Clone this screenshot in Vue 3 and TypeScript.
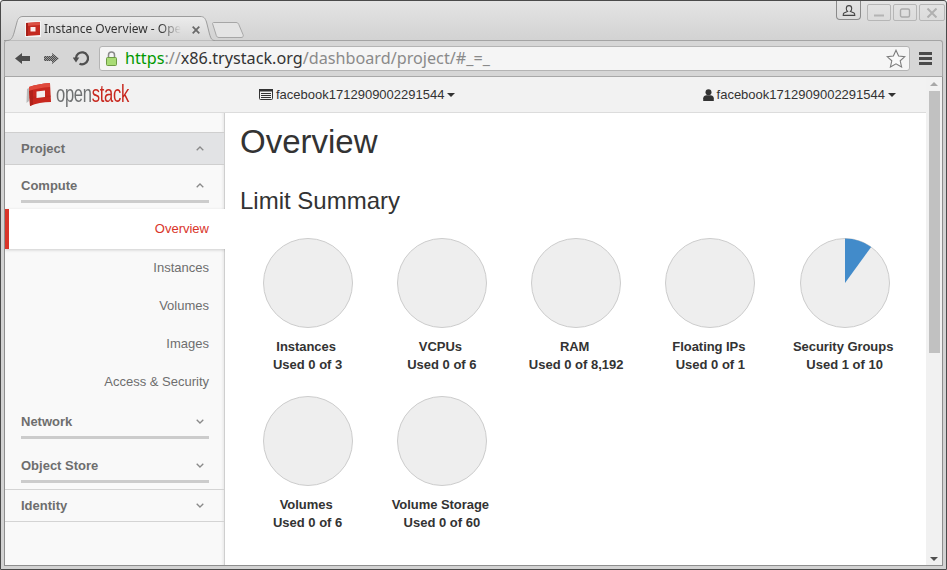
<script setup lang="ts">
interface Limit {
  name: string;
  used: number;
  total: number;
}

const limits: Limit[] = [
  { name: 'Instances', used: 0, total: 3 },
  { name: 'VCPUs', used: 0, total: 6 },
  { name: 'RAM', used: 0, total: 8192 },
  { name: 'Floating IPs', used: 0, total: 1 },
  { name: 'Security Groups', used: 1, total: 10 },
  { name: 'Volumes', used: 0, total: 6 },
  { name: 'Volume Storage', used: 0, total: 60 },
];

const computeItems = ['Instances', 'Volumes', 'Images', 'Access & Security'];
const user = 'facebook1712909002291544';

const slicePath = (l: Limit): string => {
  const a = (l.used / l.total) * Math.PI * 2;
  const x = 45 + 44.5 * Math.sin(a);
  const y = 45 - 44.5 * Math.cos(a);
  return `M45 45 L45 0.5 A44.5 44.5 0 0 1 ${x.toFixed(2)} ${y.toFixed(2)} Z`;
};
</script>

<template>
  <div class="window">
    <div class="tabstrip">
      <div class="tab">
        <svg class="tab-shape" width="212" height="25" viewBox="0 0 212 25">
          <defs>
            <linearGradient id="tabfill" x1="0" y1="0" x2="0" y2="1">
              <stop offset="0" stop-color="#ececec" />
              <stop offset="1" stop-color="#d6d6d6" />
            </linearGradient>
          </defs>
          <path d="M0 24.5 H3 C7 24.5 8.5 22 10 17 L13 6 C14 2 16 0.5 19 0.5 H196 C200 0.5 201 2 202.5 6 L205.5 18 C207 23 208 24.5 211 24.5" fill="url(#tabfill)" stroke="#9c9c9c" />
        </svg>
        <svg class="favicon" width="16" height="16" viewBox="0 0 16 16">
          <rect width="16" height="16" fill="#f4f4f4" />
          <path d="M1 2 L15 1 V14 L1 15 Z" fill="#c42a20" />
          <path d="M1 2 L15 1 V4 L1 5 Z" fill="#dc5044" />
          <path d="M1 2 H3 V15 H1 Z" fill="#a82018" />
          <rect x="5.5" y="6" width="5" height="4.5" fill="#fbeeee" />
        </svg>
        <span class="tab-title">Instance Overview - Ope</span>
        <svg class="tab-close" width="8" height="8" viewBox="0 0 8 8">
          <path d="M0.7 0.7 L7.3 7.3 M7.3 0.7 L0.7 7.3" stroke="#6a6a6a" stroke-width="1.8" />
        </svg>
      </div>
      <svg class="newtab" width="32" height="16" viewBox="0 0 32 16">
        <path d="M0.5 1.5 C0.5 0.8 1 0.5 2 0.5 H24 C25.5 0.5 26.2 1.2 26.8 2.5 L31 12.5 C31.8 14.3 31 15.5 29 15.5 H7 C5.5 15.5 4.8 14.8 4.3 13.5 Z" fill="#e4e4e4" stroke="#a6a6a6" />
      </svg>
      <div class="spacer"></div>
      <div class="profile">
        <svg width="14" height="11" viewBox="0 0 14 11">
          <path d="M7 0.6 C9 0.6 9.7 2 9.7 3.4 C9.7 4.8 9 5.9 8.4 6.4 L12 8 C12.6 8.3 12.8 9 12.8 10.4 H1.2 C1.2 9 1.4 8.3 2 8 L5.6 6.4 C5 5.9 4.3 4.8 4.3 3.4 C4.3 2 5 0.6 7 0.6 Z" fill="none" stroke="#444" stroke-width="1.1" />
        </svg>
      </div>
      <div class="winbtns">
        <div class="winbtn">
          <svg width="12" height="10" viewBox="0 0 12 10"><path d="M1 7.5 H11" stroke="#b4b4b4" stroke-width="2" /></svg>
        </div>
        <div class="winbtn">
          <svg width="12" height="10" viewBox="0 0 12 10"><rect x="1.5" y="1" width="9" height="8" rx="1.5" fill="none" stroke="#aaa" stroke-width="1.4" /></svg>
        </div>
        <div class="winbtn close">
          <svg width="12" height="10" viewBox="0 0 12 10"><path d="M1.5 0.5 L10.5 9.5 M10.5 0.5 L1.5 9.5" stroke="#b0b0b0" stroke-width="2" /></svg>
        </div>
      </div>
    </div>

    <div class="toolbar">
      <svg class="tool back" width="15" height="11" viewBox="0 0 15 11">
        <path d="M0 5.5 L7 0 V3 H15 V8 H7 V11 Z" fill="#4d4d4d" />
      </svg>
      <svg class="tool forward" width="15" height="11" viewBox="0 0 15 11">
        <defs>
          <pattern id="dither" width="2" height="2" patternUnits="userSpaceOnUse">
            <rect width="2" height="2" fill="#9a9a9a" />
            <rect width="1" height="1" fill="#4d4d4d" />
            <rect x="1" y="1" width="1" height="1" fill="#4d4d4d" />
          </pattern>
        </defs>
        <path d="M15 5.5 L8 0 V3 H0 V8 H8 V11 Z" fill="url(#dither)" />
      </svg>
      <svg class="tool reload" width="16" height="15" viewBox="0 0 16 15">
        <path d="M3 7 A6 6 0 1 1 6.5 12.8" fill="none" stroke="#4f4f4f" stroke-width="2.3" />
        <path d="M-0.3 6.5 H6.3 L3 11.5 Z" fill="#4f4f4f" />
      </svg>
      <div class="omnibox">
        <svg class="lock" width="11" height="15" viewBox="0 0 11 15">
          <path d="M2.5 7 V4 C2.5 2 3.7 1 5.5 1 C7.3 1 8.5 2 8.5 4 V7" fill="none" stroke="#8a8a8a" stroke-width="1.5" />
          <rect x="0.5" y="6.5" width="10" height="8" rx="1" fill="#a9dc76" stroke="#6d9a45" />
        </svg>
        <span class="url"><span class="scheme">https</span><span class="dim">://</span><span class="host">x86.trystack.org</span><span class="dim">/dashboard/project/#_=_</span></span>
        <svg class="star" width="20" height="19" viewBox="0 0 20 19">
          <path d="M10 1.2 L12.6 7 L18.9 7.6 L14.2 11.8 L15.6 18 L10 14.8 L4.4 18 L5.8 11.8 L1.1 7.6 L7.4 7 Z" fill="#fafafa" stroke="#7c7c7c" stroke-width="1.1" />
        </svg>
      </div>
      <div class="hamburger"><i></i><i></i><i></i></div>
    </div>

    <div class="page">
      <div class="viewport">
        <header class="navbar">
          <div class="brand">
            <svg width="26" height="25" viewBox="0 0 26 25">
              <path d="M0.5 21 L3 19 V6 L1 7 Z" fill="#b9b9b9" />
              <path d="M3 5 C9 3 16 1.5 24 1 L25 20 C17 20 10 21.5 4 24 Z" fill="#c8281f" />
              <path d="M3 5 C9 3 16 1.5 24 1 V5 C16 5.5 9 7 3 9 Z" fill="#e0493c" />
              <path d="M3 9 L7 8 V22.5 L4 24 Z" fill="#b1221a" />
              <path d="M3.5 15 L24.6 13.5 V15 L3.7 16.5 Z" fill="#b1221a" opacity="0.5" />
              <path d="M10.5 9.5 L19 8.6 V15 L10.5 16 Z" fill="#f4f0ee" />
            </svg>
            <span class="wordmark"><span class="open">open</span><span class="stack">stack</span></span>
          </div>
          <div class="project-picker">
            <svg width="14" height="11" viewBox="0 0 14 11">
              <rect x="0.5" y="0.5" width="13" height="10" rx="1" fill="none" stroke="#333" />
              <rect x="0" y="0" width="14" height="2.5" fill="#333" />
              <path d="M2 4.5 H12 M2 6.5 H12 M2 8.5 H12" stroke="#333" />
            </svg>
            <span>{{ user }}</span><i class="caret"></i>
          </div>
          <div class="user-menu">
            <svg width="11" height="12" viewBox="0 0 11 12">
              <circle cx="5.5" cy="3.2" r="3" fill="#333" />
              <path d="M0.2 12 V9.3 C0.2 7.4 2 6.2 3.5 6.2 H7.5 C9 6.2 10.8 7.4 10.8 9.3 V12 Z" fill="#333" />
            </svg>
            <span>{{ user }}</span><i class="caret"></i>
          </div>
        </header>

        <div class="body">
          <aside class="sidebar">
            <div class="dash-head">
              <span>Project</span>
              <svg class="chev" width="8" height="5" viewBox="0 0 8 5"><path d="M0.7 4.3 L4 1 L7.3 4.3" fill="none" stroke="#8a8a8a" stroke-width="1.3" /></svg>
            </div>

            <div class="group-head">
              <span>Compute</span>
              <svg class="chev" width="8" height="5" viewBox="0 0 8 5"><path d="M0.7 4.3 L4 1 L7.3 4.3" fill="none" stroke="#8a8a8a" stroke-width="1.3" /></svg>
            </div>
            <a class="item active">Overview</a>
            <a v-for="item in computeItems" :key="item" class="item">{{ item }}</a>

            <div class="group-head">
              <span>Network</span>
              <svg class="chev" width="8" height="5" viewBox="0 0 8 5"><path d="M0.7 0.7 L4 4 L7.3 0.7" fill="none" stroke="#8a8a8a" stroke-width="1.3" /></svg>
            </div>
            <div class="group-head spaced">
              <span>Object Store</span>
              <svg class="chev" width="8" height="5" viewBox="0 0 8 5"><path d="M0.7 0.7 L4 4 L7.3 0.7" fill="none" stroke="#8a8a8a" stroke-width="1.3" /></svg>
            </div>
            <div class="dash-head plain">
              <span>Identity</span>
              <svg class="chev" width="8" height="5" viewBox="0 0 8 5"><path d="M0.7 0.7 L4 4 L7.3 0.7" fill="none" stroke="#8a8a8a" stroke-width="1.3" /></svg>
            </div>
          </aside>

          <main class="content">
            <h1>Overview</h1>
            <h2>Limit Summary</h2>
            <div class="charts">
              <div v-for="l in limits" :key="l.name" class="chart">
                <svg width="90" height="90" viewBox="0 0 90 90">
                  <circle cx="45" cy="45" r="44.5" fill="#eeeeee" stroke="#cccccc" />
                  <path v-if="l.used > 0" :d="slicePath(l)" fill="#428bca" />
                </svg>
                <strong class="chart-name">{{ l.name }}</strong>
                <strong class="chart-used">Used {{ l.used }} of {{ l.total.toLocaleString('en-US') }}</strong>
              </div>
            </div>
          </main>
        </div>
      </div>

      <div class="scrollbar">
        <i class="arrow up"></i>
        <div class="thumb"></div>
        <div class="spacer"></div>
        <i class="arrow down"></i>
      </div>
    </div>
  </div>
</template>

<style>
html,
body {
  margin: 0;
  overflow: hidden;
}
</style>

<style scoped>
.window {
  width: 947px;
  height: 570px;
  box-sizing: border-box;
  display: flex;
  flex-direction: column;
  border: 1px solid #4a4a4a;
  border-radius: 3px 3px 0 0;
  background: linear-gradient(#e4e4e4, #d2d2d2 40px);
  font-family: "Liberation Sans", Arial, sans-serif;
  overflow: hidden;
}

.spacer {
  flex: 1;
}

.tabstrip {
  height: 39px;
  flex: none;
  display: flex;
  align-items: flex-start;
}

.tab {
  position: relative;
  z-index: 1;
  width: 212px;
  height: 25px;
  margin: 15px 0 0 3px;
  flex: none;
}

.tab-shape {
  position: absolute;
  left: 0;
  top: 0;
}

.favicon {
  position: absolute;
  left: 21px;
  top: 5px;
}

.tab-title {
  position: absolute;
  left: 40px;
  top: 5px;
  white-space: nowrap;
  font: 12px/16px "Noto Sans", sans-serif;
  color: #333;
  -webkit-mask-image: linear-gradient(to right, #000 85%, transparent);
  mask-image: linear-gradient(to right, #000 85%, transparent);
}

.tab-close {
  position: absolute;
  left: 188px;
  top: 10px;
}

.newtab {
  margin: 21px 0 0 -4px;
  flex: none;
}

.profile {
  width: 25px;
  height: 19px;
  margin-right: 6px;
  box-sizing: border-box;
  border: 1px solid #8a8a8a;
  border-top: none;
  border-radius: 0 0 4px 4px;
  display: flex;
  align-items: center;
  justify-content: center;
}

.winbtns {
  display: flex;
  gap: 2px;
  margin-top: 3px;
  margin-right: 1px;
}

.winbtn {
  width: 24px;
  height: 17px;
  box-sizing: border-box;
  border: 1px solid #b6b6b6;
  border-radius: 2px;
  display: flex;
  align-items: center;
  justify-content: center;
}

.winbtn.close {
  width: 26px;
}

.toolbar {
  height: 37px;
  flex: none;
  margin: 0 3px;
  box-sizing: border-box;
  display: flex;
  align-items: center;
  border: 1px solid #a4a4a4;
  border-bottom-color: #a8a8a8;
  border-radius: 3px 3px 0 0;
  background: #d6d6d6;
}

.tool {
  flex: none;
}

.back {
  margin-left: 10px;
}

.forward {
  margin-left: 14px;
}

.reload {
  margin-left: 14px;
}

.omnibox {
  width: 811px;
  height: 25px;
  margin-left: 10px;
  box-sizing: border-box;
  display: flex;
  align-items: center;
  border: 1px solid #b4b4b4;
  border-radius: 3px;
  background: #f5f5f5;
  flex: none;
}

.lock {
  margin-left: 6px;
  flex: none;
}

.url {
  margin-left: 8px;
  margin-top: -2px;
  font: 16.2px "Noto Sans", sans-serif;
  white-space: nowrap;
  color: #222;
}

.scheme {
  color: #009900;
}

.dim {
  color: #8a8a8a;
}

.host {
  color: #333;
}

.star {
  margin-left: auto;
  margin-right: 3px;
}

.hamburger {
  margin-left: 9px;
  display: flex;
  flex-direction: column;
  gap: 2px;
}

.hamburger i {
  display: block;
  width: 13px;
  height: 3px;
  background: #4a4a4a;
}

.page {
  flex: 1;
  min-height: 0;
  margin: 0 3px 3px;
  display: flex;
  border-left: 1px solid #8e8e8e;
  border-right: 1px solid #8e8e8e;
  border-bottom: 1px solid #8e8e8e;
  background: #fff;
}

.viewport {
  flex: 1;
  min-width: 0;
  display: flex;
  flex-direction: column;
}

.navbar {
  height: 36px;
  flex: none;
  box-sizing: border-box;
  display: flex;
  align-items: center;
  background: #f2f2f2;
  border-bottom: 1px solid #dcdcdc;
  font-size: 13px;
  color: #333;
}

.brand {
  width: 254px;
  padding-left: 21px;
  box-sizing: border-box;
  display: flex;
  align-items: center;
  gap: 4px;
  flex: none;
}

.wordmark {
  display: inline-block;
  font: 23px "Liberation Sans", sans-serif;
  letter-spacing: -0.4px;
  transform: scaleX(0.72);
  transform-origin: left center;
}

.open {
  color: #6f7172;
}

.stack {
  color: #c8281f;
}

.project-picker,
.user-menu {
  display: flex;
  align-items: center;
  gap: 3px;
}

.user-menu {
  margin-left: auto;
  margin-right: 30px;
}

.caret {
  width: 0;
  height: 0;
  border-top: 4px solid #333;
  border-left: 4px solid transparent;
  border-right: 4px solid transparent;
}

.body {
  flex: 1;
  min-height: 0;
  display: flex;
}

.sidebar {
  width: 220px;
  flex: none;
  box-sizing: border-box;
  padding-top: 19px;
  background: #f9f9f9;
  border-right: 1px solid #cfcfcf;
  box-shadow: inset -3px 0 3px -2px rgba(0, 0, 0, 0.08);
  font-size: 13px;
  color: #6e6e6e;
}

.dash-head {
  height: 33px;
  box-sizing: border-box;
  padding: 0 15px 0 16px;
  display: flex;
  align-items: center;
  justify-content: space-between;
  font-weight: 700;
  background: #e2e3e5;
  border-top: 1px solid #cfcfcf;
  border-bottom: 1px solid #cfcfcf;
}

.dash-head.plain {
  margin-top: 6px;
  background: transparent;
  border-color: #d4d4d4;
}

.chev {
  margin-right: 5px;
}

.group-head {
  height: 38px;
  margin: 0 15px 0 16px;
  box-sizing: border-box;
  padding-top: 5px;
  display: flex;
  align-items: center;
  justify-content: space-between;
  font-weight: 700;
  border-bottom: 3px solid #cccccc;
}

.group-head.spaced {
  margin-top: 6px;
}

.group-head:nth-child(2) {
  margin-bottom: 6px;
}

.item {
  height: 38px;
  box-sizing: border-box;
  padding: 0 15px 2px 0;
  display: flex;
  align-items: center;
  justify-content: flex-end;
}

.item.active {
  position: relative;
  height: 40px;
  margin-right: -1px;
  padding-right: 16px;
  background: #fff;
  color: #d9352a;
  border-left: 4px solid #d9352a;
  box-shadow: 0 1px 3px rgba(0, 0, 0, 0.18);
  clip-path: inset(-4px 0 -4px 0);
}

.content {
  flex: 1;
  min-width: 0;
  padding-left: 15px;
  color: #333;
  background: #fff;
}

h1 {
  margin: 9px 0 0;
  font-size: 33px;
  line-height: 39px;
  font-weight: 400;
}

h2 {
  margin: 27px 0 0;
  font-size: 24px;
  line-height: 26px;
  font-weight: 400;
}

.charts {
  display: grid;
  grid-template-columns: repeat(5, 134.25px);
  grid-auto-rows: 158px;
  margin: 24px 0 0 0.5px;
}

.chart {
  display: flex;
  flex-direction: column;
  align-items: center;
  font-size: 13px;
  line-height: 18px;
}

.chart svg {
  display: block;
  margin-bottom: 10px;
}

.chart-name {
  margin-right: 3px;
  letter-spacing: -0.05px;
}

.scrollbar {
  width: 16px;
  flex: none;
  display: flex;
  flex-direction: column;
  align-items: center;
  background: #f1f1f1;
}

.arrow {
  flex: none;
  width: 0;
  height: 0;
  border-left: 4px solid transparent;
  border-right: 4px solid transparent;
}

.arrow.up {
  margin-top: 5px;
  border-bottom: 4px solid #a8a8a8;
}

.arrow.down {
  margin-bottom: 4px;
  border-top: 4px solid #505050;
}

.thumb {
  width: 11px;
  height: 262px;
  margin-top: 5px;
  background: #c1c1c1;
}
</style>
